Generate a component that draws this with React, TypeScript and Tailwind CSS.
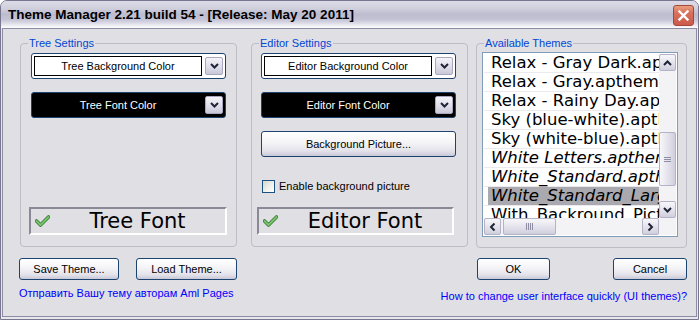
import React from "react";

const themes = [
  { name: "Relax - Gray Dark.apthemes" },
  { name: "Relax - Gray.apthemes" },
  { name: "Relax - Rainy Day.apthemes" },
  { name: "Sky (blue-white).apthemes" },
  { name: "Sky (white-blue).apthemes" },
  { name: "White Letters.apthemes", italic: true },
  { name: "White_Standard.apthemes", italic: true },
  { name: "White_Standard_Large.apthemes", italic: true, selected: true },
  { name: "With_Backround_Picture.apthemes" },
];

const Chevron = ({ dir = "down" }: { dir?: "up" | "down" | "left" | "right" }) => {
  const rot = dir === "up" ? 180 : dir === "left" ? 90 : dir === "right" ? -90 : 0;
  return (
    <svg width="9" height="6" viewBox="0 0 9 6" style={{ transform: `rotate(${rot}deg)` }}>
      <path d="M1 1 L4.5 4.5 L8 1" fill="none" stroke="#1f2436" strokeWidth="2" />
    </svg>
  );
};

const Check = () => (
  <svg width="15" height="12" viewBox="0 0 15 12" className="ml-[4px] shrink-0">
    <path d="M1.5 6 L5.5 10 L13.5 2" fill="none" stroke="#3f7d3c" strokeWidth="3.6" strokeLinecap="round" strokeLinejoin="round" />
    <path d="M1.5 6 L5.5 10 L13.5 2" fill="none" stroke="#77c46a" strokeWidth="1.8" strokeLinecap="round" strokeLinejoin="round" />
  </svg>
);

const Combo = ({ label, dark = false, className = "" }: { label: string; dark?: boolean; className?: string }) => (
  <div className={`flex h-[26px] w-[195px] items-center rounded-[3px] border border-[#1d4470] px-[2px] ${dark ? "bg-black" : "bg-white"} ${className}`}>
    <div className={`flex h-[20px] flex-1 items-center justify-center border text-[11px] ${dark ? "border-black bg-black text-white" : "border-black bg-white text-black"}`}>
      {label}
    </div>
    <div className="ml-[3px] flex h-[18px] w-[18px] items-center justify-center rounded-[2px] border border-[#a9a8c0] bg-[linear-gradient(to_bottom,#f4f4f8,#dddce8_60%,#c9c8d8)]">
      <Chevron />
    </div>
  </div>
);

const FontBox = ({ label, className = "" }: { label: string; className?: string }) => (
  <div className={`mb-[11px] mt-auto flex h-[28px] items-center border-2 border-b-white border-l-[#8a8996] border-r-white border-t-[#8a8996] ${className}`}>
    <Check />
    <span className="flex-1 text-center font-['DejaVu_Sans',sans-serif] text-[21px] leading-[24px] text-black">{label}</span>
  </div>
);

const XpButton = ({ children, className = "" }: { children: React.ReactNode; className?: string }) => (
  <button className={`flex items-center justify-center rounded-[3px] border border-[#1d4470] bg-[linear-gradient(to_bottom,#ffffff,#f4f4f7_45%,#e3e2ea_80%,#c8c7d6)] text-[11px] text-black ${className}`}>
    {children}
  </button>
);

const ScrollBtn = ({ dir }: { dir: "up" | "down" | "left" | "right" }) => (
  <div className="flex h-[17px] w-[17px] shrink-0 items-center justify-center rounded-[2px] border border-[#b3b2c7] bg-[linear-gradient(to_bottom,#f7f7fa,#e1e0ea_60%,#cfcedc)]">
    <Chevron dir={dir} />
  </div>
);

export default function App() {
  return (
    <div className="flex h-[320px] w-[699px] flex-col rounded-t-[7px] border border-[#77768e] bg-[#e6e6ed] font-['Liberation_Sans',Arial,sans-serif]">
      <div className="flex h-[27px] items-start justify-between rounded-t-[6px] bg-[linear-gradient(to_bottom,#dcdbe6,#d2d1de_25%,#bdbccf_50%,#c6c5d6_70%,#ebebf1_90%,#ffffff)] pl-[7px] pr-[4px] pt-[4px]">
        <span className="pt-[2px] text-[13.5px] font-bold leading-[15px] text-black">
          Theme Manager 2.21 build 54 - [Release: May 20 2011]
        </span>
        <div className="flex h-[21px] w-[21px] items-center justify-center rounded-[3px] border border-[#a9463a] bg-[linear-gradient(to_bottom,#e9a07c,#d9705c_35%,#cc5a4c)]">
          <svg width="11" height="11" viewBox="0 0 11 11">
            <path d="M1.5 1.5 L9.5 9.5 M9.5 1.5 L1.5 9.5" stroke="#ffffff" strokeWidth="2.4" strokeLinecap="square" />
          </svg>
        </div>
      </div>

      <div className="flex flex-1 flex-col px-[1px] pb-[2px]">
        <div className="flex flex-1 flex-col border border-[#8d8ca5] bg-[#e0dfe3] pt-[8px]">
          <div className="flex pl-[17px]">
            <fieldset className="h-[210px] w-[217px] rounded-[4px] border border-[#bebdc6] px-[7px]">
              <legend className="px-[1px] text-[11px] leading-[13px] text-[#0046d5]">Tree Settings</legend>
              <div className="flex h-[196px] flex-col">
                <Combo label="Tree Background Color" className="ml-[3px] mt-[3px]" />
                <Combo label="Tree Font Color" dark className="ml-[3px] mt-[13px]" />
                <FontBox label="Tree Font" className="ml-[1px] w-[198px]" />
              </div>
            </fieldset>

            <fieldset className="ml-[14px] h-[210px] w-[217px] rounded-[4px] border border-[#bebdc6] px-[7px]">
              <legend className="px-[1px] text-[11px] leading-[13px] text-[#0046d5]">Editor Settings</legend>
              <div className="flex h-[196px] flex-col">
                <Combo label="Editor Background Color" className="ml-[2px] mt-[3px]" />
                <Combo label="Editor Font Color" dark className="ml-[2px] mt-[13px]" />
                <XpButton className="ml-[2px] mt-[13px] h-[26px] w-[195px]">Background Picture...</XpButton>
                <label className="ml-[3px] mt-[21px] flex items-center gap-[4px] text-[11px] text-black">
                  <span className="h-[13px] w-[13px] border border-[#1c5180] bg-[linear-gradient(135deg,#d6d6cf,#f2f2ee_60%,#ffffff)]" />
                  Enable background picture
                </label>
                <FontBox label="Editor Font" className="ml-[-2px] w-[197px]" />
              </div>
            </fieldset>

            <fieldset className="ml-[8px] h-[211px] w-[211px] rounded-[4px] border border-[#bebdc6] px-[7px]">
              <legend className="px-[1px] text-[11px] leading-[13px] text-[#0046d5]">Available Themes</legend>
              <div className="ml-[-2px] mt-[2px] flex h-[185px] w-[196px] flex-col border border-[#7f9db9] bg-white p-[1px]">
                <div className="flex min-h-0 flex-1">
                  <div className="min-w-0 flex-1 overflow-hidden font-['DejaVu_Sans',sans-serif] text-[16.5px] leading-[18px] text-black">
                    {themes.map((t) => (
                      <div key={t.name} className="flex h-[19px] border-b border-[#e9e9ee] pl-[4px]">
                        <span className={`flex-1 whitespace-nowrap pl-[3px] ${t.italic ? "italic" : ""} ${t.selected ? "bg-[#a9a9af]" : ""}`}>
                          {t.name}
                        </span>
                      </div>
                    ))}
                  </div>
                  <div className="flex w-[17px] flex-col bg-[#f3f3f6]">
                    <ScrollBtn dir="up" />
                    <div className="flex-1">
                      <div className="mt-[61px] flex h-[54px] items-center justify-center rounded-[2px] border border-[#b3b2c7] bg-[linear-gradient(to_right,#f7f7fa,#e1e0ea_60%,#cfcedc)]">
                        <div className="flex flex-col gap-[1px]">
                          <span className="h-[1px] w-[7px] bg-[#8e8da3]" />
                          <span className="h-[1px] w-[7px] bg-[#8e8da3]" />
                          <span className="h-[1px] w-[7px] bg-[#8e8da3]" />
                        </div>
                      </div>
                    </div>
                    <ScrollBtn dir="down" />
                  </div>
                </div>
                <div className="flex h-[17px]">
                  <div className="flex flex-1 bg-[#f3f3f6]">
                    <ScrollBtn dir="left" />
                    <div className="flex-1">
                      <div className="ml-[2px] flex h-[17px] w-[53px] items-center justify-center rounded-[2px] border border-[#b3b2c7] bg-[linear-gradient(to_bottom,#f7f7fa,#e1e0ea_60%,#cfcedc)]">
                        <div className="flex gap-[1px]">
                          <span className="h-[7px] w-[1px] bg-[#8e8da3]" />
                          <span className="h-[7px] w-[1px] bg-[#8e8da3]" />
                          <span className="h-[7px] w-[1px] bg-[#8e8da3]" />
                          <span className="h-[7px] w-[1px] bg-[#8e8da3]" />
                        </div>
                      </div>
                    </div>
                    <ScrollBtn dir="right" />
                  </div>
                  <div className="w-[17px] bg-[#f3f3f6]" />
                </div>
              </div>
            </fieldset>
          </div>

          <div className="mt-[10px] flex justify-between pl-[16px] pr-[9px]">
            <div className="flex flex-col">
              <div className="flex gap-[17px]">
                <XpButton className="h-[22px] w-[100px]">Save Theme...</XpButton>
                <XpButton className="h-[22px] w-[101px]">Load Theme...</XpButton>
              </div>
              <a className="mt-[7px] text-[11px] leading-[13px] text-[#0000ff]">Отправить Вашу тему авторам Aml Pages</a>
            </div>
            <div className="flex flex-col items-end">
              <div className="flex gap-[63px]">
                <XpButton className="h-[22px] w-[73px]">OK</XpButton>
                <XpButton className="h-[22px] w-[74px]">Cancel</XpButton>
              </div>
              <a className="mt-[10px] text-[11px] leading-[13px] text-[#0000ff]">How to change user interface quickly (UI themes)?</a>
            </div>
          </div>
        </div>
      </div>
    </div>
  );
}
